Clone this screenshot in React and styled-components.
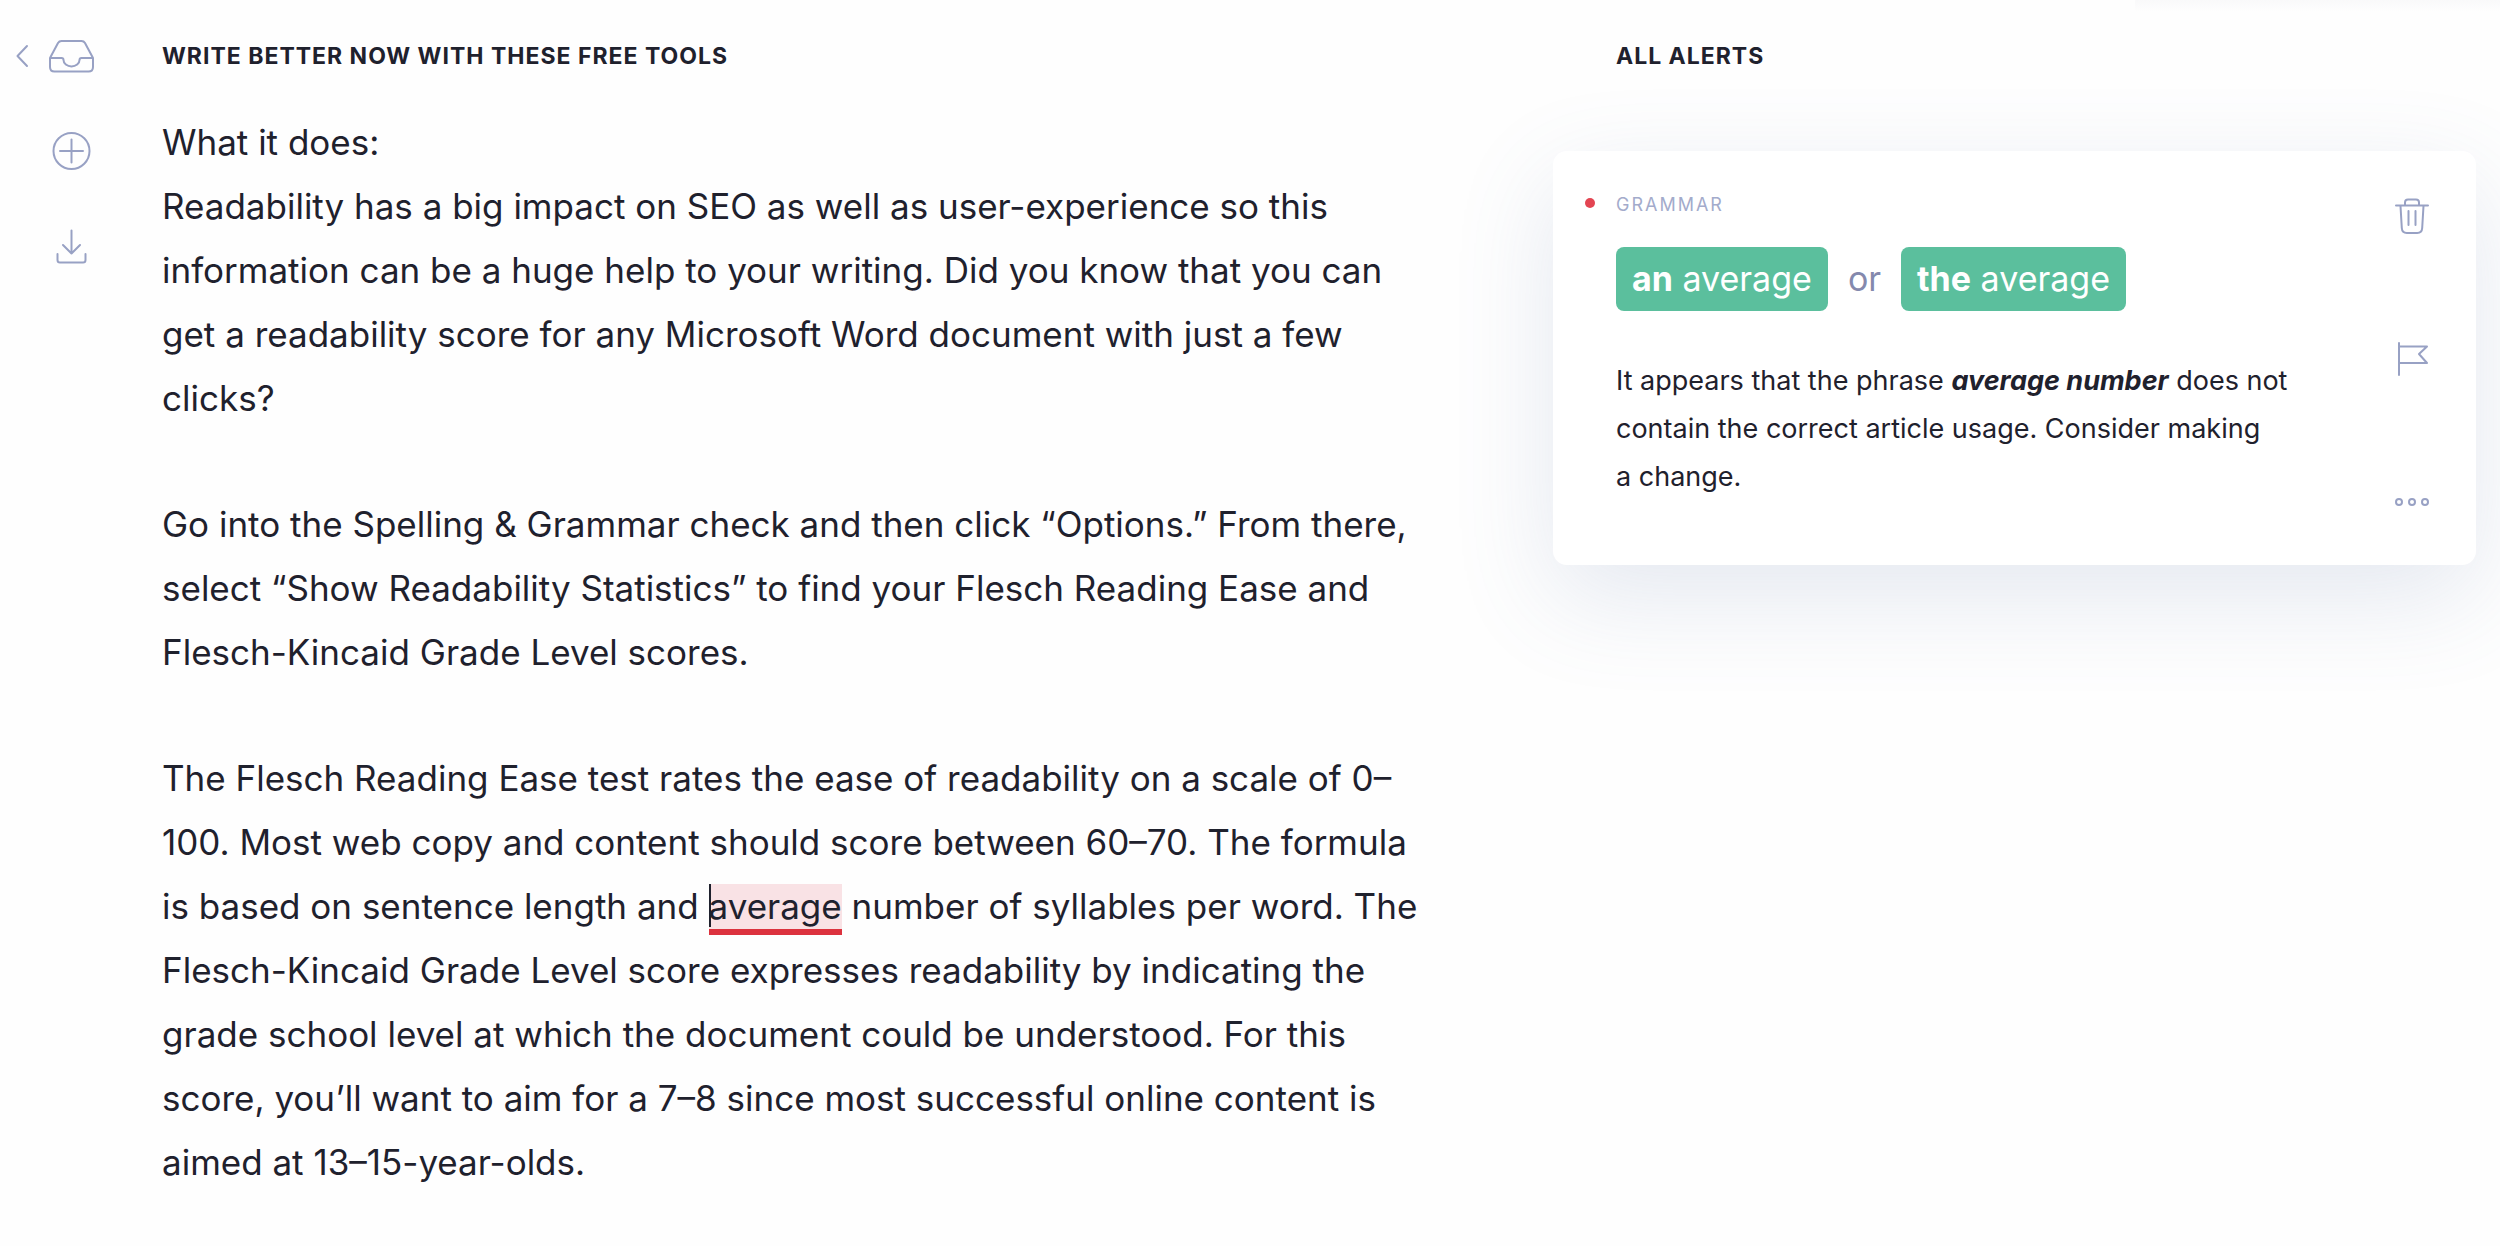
import React from "react";
import styled, { createGlobalStyle } from "styled-components";

const ink = "#1f212d";
const muted = "#98a1c4";

const GlobalStyle = createGlobalStyle`
  *, *::before, *::after { box-sizing: border-box; }
  body {
    margin: 0;
    min-height: 100vh;
    background: linear-gradient(to bottom, #f9f9fa, #fefefe) no-repeat right top / 365px 12px #fefefe;
    color: ${ink};
    font-family: Inter, "Liberation Sans", sans-serif;
  }
`;

const Page = styled.div`
  display: grid;
  grid-template-columns: 162px minmax(0, 1.507fr) minmax(0, 1fr);
  align-items: start;
  min-height: 100vh;
  padding-right: 24px;
`;

const Sidebar = styled.nav`
  display: grid;
  grid-template-columns: 48px 48px;
  justify-items: center;
  row-gap: 48px;
  padding-top: 31px;
`;

const IconButton = styled.button`
  display: flex;
  align-items: center;
  justify-content: center;
  width: 48px;
  height: 48px;
  padding: 0;
  border: 0;
  background: none;
  color: ${muted};
  cursor: pointer;
  grid-column: ${(p) => p.$column || "auto"};
`;

const Icon = styled.svg`
  display: block;
  width: 48px;
  height: 48px;
  fill: none;
  stroke: currentColor;
  stroke-width: 2;
  stroke-linecap: round;
  stroke-linejoin: round;
`;

const Heading = styled.h2`
  margin: 0;
  padding-left: ${(p) => p.$inset || 0}px;
  font-size: 23px;
  line-height: 32px;
  font-weight: 700;
  letter-spacing: 1px;
  text-transform: uppercase;
`;

const Editor = styled.main`
  padding-top: 40px;
`;

const Document = styled.div`
  display: flex;
  flex-direction: column;
  gap: 62px;
  max-width: 1256px;
  margin-top: 38px;
  font-size: 35px;
  line-height: 64px;
  outline: none;
`;

const Paragraph = styled.p`
  margin: 0;
`;

const Flagged = styled.mark`
  position: relative;
  padding: 1px 0 2px;
  border-bottom: 6px solid #dc323e;
  background: #f9e2e5;
  color: inherit;

  &::before {
    content: "";
    position: absolute;
    top: 0;
    bottom: 2px;
    left: 0;
    width: 2px;
    background: ${ink};
  }
`;

const Alerts = styled.aside`
  padding-top: 40px;
`;

const Card = styled.article`
  display: grid;
  grid-template-columns: minmax(0, 1fr) 48px;
  margin-top: 79px;
  padding: 41px 40px 39px 32px;
  border-radius: 14px;
  background: #fff;
  box-shadow: 0 32px 100px rgba(92, 117, 167, 0.16);
`;

const CardBody = styled.div`
  display: grid;
  grid-template-columns: 31px minmax(0, 1fr);
  align-content: start;
`;

const Dot = styled.span`
  width: 10px;
  height: 10px;
  margin-top: 6px;
  border-radius: 50%;
  background: #e34552;
`;

const Category = styled.h3`
  margin: 0;
  color: #a3abcb;
  font-size: 18px;
  line-height: 26px;
  font-weight: 400;
  letter-spacing: 2px;
  text-transform: uppercase;
`;

const Suggestions = styled.div`
  grid-column: 2;
  display: flex;
  align-items: center;
  gap: 20px;
  margin-top: 29px;
  color: #8489ad;
  font-size: 34px;
  line-height: 64px;
`;

const Suggestion = styled.button`
  padding: 0 16px;
  border: 0;
  border-radius: 8px;
  background: #5bbf9d;
  color: #fff;
  font: inherit;
  cursor: pointer;
`;

const Explanation = styled.p`
  grid-column: 2;
  max-width: 690px;
  margin: 46px 0 0;
  font-size: 27px;
  line-height: 48px;
`;

const Actions = styled.div`
  display: flex;
  flex-direction: column;
  gap: 95px;
`;

export default function App() {
  return (
    <>
      <GlobalStyle />
      <Page>
        <Sidebar aria-label="Document">
          <IconButton type="button" aria-label="Back">
            <Icon viewBox="0 0 48 48"><path d="M27 15 17.500 25l9.500 10" /></Icon>
          </IconButton>
          <IconButton type="button" aria-label="Inbox">
            <Icon viewBox="0 0 48 48">
              <path d="M2 27 10 12Q11.200 10 13.500 10H33.500Q35.800 10 37 12L45 27V36Q45 40.500 40.500 40.500H6.500Q2 40.500 2 36V27H13.500Q15.500 27 15.500 29A8 6.500 0 0 0 31.500 29Q31.500 27 33.500 27H45" />
            </Icon>
          </IconButton>
          <IconButton type="button" aria-label="New document" $column="2">
            <Icon viewBox="0 0 48 48">
              <circle cx="23.500" cy="24" r="18" />
              <path d="M12 24h23M23.500 12.500v23" />
            </Icon>
          </IconButton>
          <IconButton type="button" aria-label="Download" $column="2">
            <Icon viewBox="0 0 48 48">
              <path d="M23.500 7.500v23M15 22l8.500 8.500L32 22M9.500 31v6q0 2.500 2.500 2.500h23q2.500 0 2.500-2.500v-6" />
            </Icon>
          </IconButton>
        </Sidebar>

        <Editor>
          <Heading as="h1">Write better now with these free tools</Heading>
          <Document contentEditable suppressContentEditableWarning role="textbox" aria-multiline="true" aria-label="Document text" spellCheck={false}>
            <Paragraph>
              What it does:<br />
              Readability has a big impact on SEO as well as user-experience so this
              information can be a huge help to your writing. Did you know that you can
              get a readability score for any Microsoft Word document with just a few
              clicks?
            </Paragraph>
            <Paragraph>
              Go into the Spelling &amp; Grammar check and then click “Options.” From there,
              select “Show Readability Statistics” to find your Flesch Reading Ease and
              Flesch-Kincaid Grade Level scores.
            </Paragraph>
            <Paragraph>
              The Flesch Reading Ease test rates the ease of readability on a scale of
              0–100. Most web copy and content should score between 60–70. The formula
              is based on sentence length and <Flagged>average</Flagged> number of
              syllables per word. The Flesch-Kincaid Grade Level score expresses
              readability by indicating the grade school level at which the document
              could be understood. For this score, you’ll want to aim for a 7–8 since
              most successful online content is aimed at 13–15-year-olds.
            </Paragraph>
          </Document>
        </Editor>

        <Alerts>
          <Heading $inset={63}>All alerts</Heading>
          <Card>
            <CardBody>
              <Dot />
              <Category>Grammar</Category>
              <Suggestions>
                <Suggestion type="button"><b>an</b> average</Suggestion>
                <span>or</span>
                <Suggestion type="button"><b>the</b> average</Suggestion>
              </Suggestions>
              <Explanation>
                It appears that the phrase <b><i>average number</i></b> does not
                contain the correct article usage. Consider making a&nbsp;change.
              </Explanation>
            </CardBody>
            <Actions>
              <IconButton type="button" aria-label="Dismiss">
                <Icon viewBox="0 0 48 48">
                  <path d="M8 13.500h32M17 13V10.500Q17 7.500 20 7.500h8q3 0 3 3V13M12.500 14l1.300 22q.3 5 5 5h10.400q4.700 0 5-5l1.300-22M20.500 19v14M27.500 19v14" />
                </Icon>
              </IconButton>
              <IconButton type="button" aria-label="Report">
                <Icon viewBox="0 0 48 48">
                  <path d="M11 8v32M11 11.500h28l-8 7.500 8 9h-28" />
                </Icon>
              </IconButton>
              <IconButton type="button" aria-label="More">
                <Icon viewBox="0 0 48 48">
                  <circle cx="11" cy="24" r="3" />
                  <circle cx="24" cy="24" r="3" />
                  <circle cx="37" cy="24" r="3" />
                </Icon>
              </IconButton>
            </Actions>
          </Card>
        </Alerts>
      </Page>
    </>
  );
}
